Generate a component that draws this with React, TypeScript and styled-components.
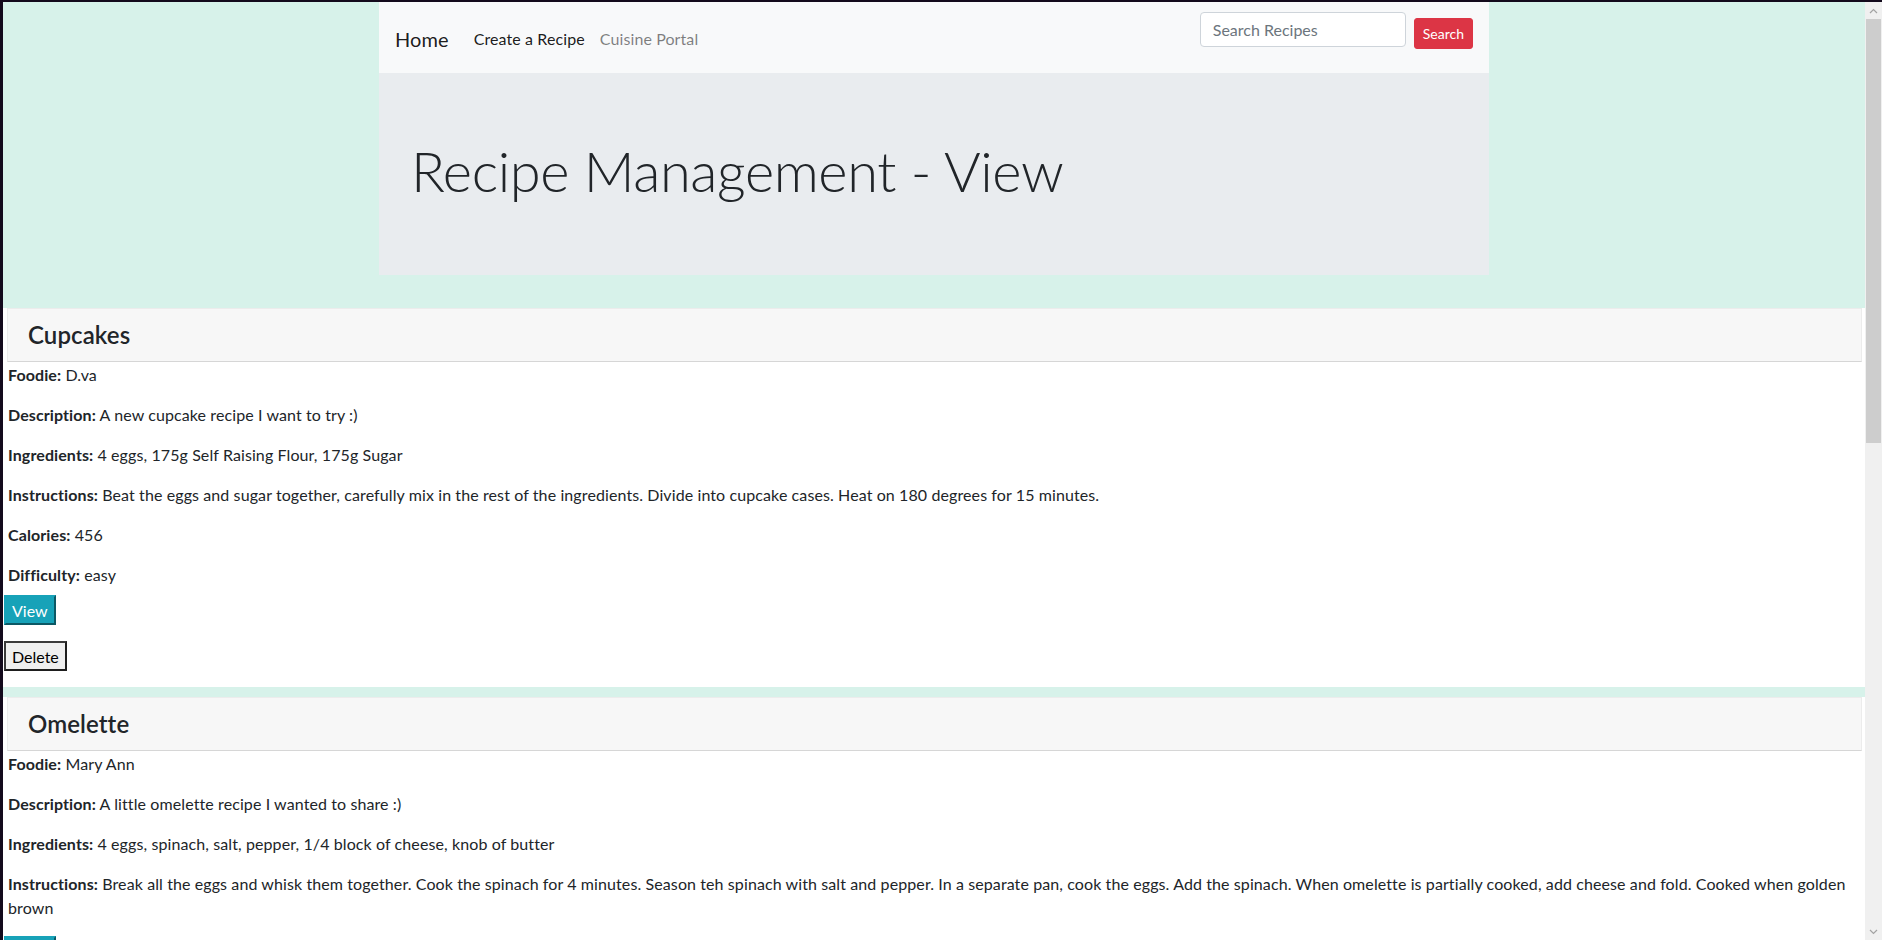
import React from "react";
import styled, { createGlobalStyle } from "styled-components";

const GlobalStyle = createGlobalStyle`
  html, body { margin: 0; padding: 0; }
  body {
    font-family: Lato, "Open Sans", sans-serif;
    background: #d7f2ea;
    color: #212529;
    font-size: 16px;
    line-height: 1.5;
    letter-spacing: 0.1px;
  }
`;

const Page = styled.div`
  box-sizing: border-box;
  min-height: 2000px;
  padding-right: 17px;
  border-top: 2px solid #130a1c;
  border-left: 3px solid #130a1c;
`;

const Scrollbar = styled.div`
  position: fixed;
  top: 2px;
  right: 0;
  bottom: 0;
  width: 17px;
  display: flex;
  flex-direction: column;
  background: #f0f0f0;
`;

const ScrollArrow = styled.div`
  height: 17px;
  display: flex;
  align-items: center;
  justify-content: center;
  flex: none;
`;

const ScrollTrack = styled.div`
  flex: 1;
`;

const ScrollThumb = styled.div`
  height: 424px;
  margin: 0 1px;
  background: #cdcdcd;
`;

const Container = styled.div`
  width: 1110px;
  margin: 0 auto;
`;

const Navbar = styled.nav`
  display: flex;
  align-items: flex-start;
  height: 71px;
  padding: 0 16px;
  background: #f8f9fa;
`;

const NavLeft = styled.div`
  display: flex;
  align-items: center;
  height: 71px;
  padding-top: 3px;
  box-sizing: border-box;
`;

const Brand = styled.a`
  font-size: 20px;
  line-height: 30px;
  color: rgba(0, 0, 0, 0.9);
  margin-right: 25px;
  text-decoration: none;
`;

const NavLink = styled.a<{ $muted?: boolean }>`
  font-size: 16px;
  line-height: 24px;
  color: ${(p) => (p.$muted ? "rgba(0,0,0,0.5)" : "rgba(0,0,0,0.9)")};
  margin-right: 15px;
  text-decoration: none;
`;

const SearchForm = styled.form`
  margin-left: auto;
  display: flex;
  align-items: flex-start;
  gap: 8px;
`;

const SearchInput = styled.input`
  box-sizing: border-box;
  width: 206px;
  height: 35px;
  margin-top: 10px;
  padding: 0 12px;
  border: 1px solid #ced4da;
  border-radius: 4px;
  background: #fff;
  font-family: inherit;
  font-size: 16px;
  color: #495057;
  &::placeholder { color: #6c757d; }
`;

const SearchButton = styled.button`
  box-sizing: border-box;
  height: 31px;
  margin-top: 16px;
  padding: 0 8px;
  border: 1px solid #dc3545;
  border-radius: 3px;
  background: #dc3545;
  color: #fff;
  font-family: inherit;
  font-size: 14px;
`;

const Jumbotron = styled.header`
  box-sizing: border-box;
  height: 202px;
  padding: 64px 32px 0;
  margin-bottom: 33px;
  background: #e9ecef;
`;

const Title = styled.h1`
  margin: 0;
  font-size: 56px;
  font-weight: 300;
  line-height: 1.2;
  letter-spacing: -0.4px;
  color: #212529;
`;

const RecipeCard = styled.section`
  display: flow-root;
  background: #fff;
  margin-bottom: 10px;
`;

const CardHeader = styled.div`
  margin: 0 3px 0 4px;
  padding: 12px 20px;
  background: #f7f7f7;
  border: 1px solid #ececec;
  border-bottom-color: #d6d6d6;
`;

const CardTitle = styled.h4`
  margin: 0;
  font-size: 24px;
  font-weight: 600;
  line-height: 28px;
`;

const Fields = styled.div`
  padding-top: 1px;
`;

const Field = styled.p<{ $tight?: boolean }>`
  margin: 0 0 ${(p) => (p.$tight ? "8px" : "16px")};
  padding-left: 5px;
  line-height: 24px;
`;

const ActionForm = styled.form`
  margin: 0 0 16px 1px;
`;

const ViewButton = styled.button`
  box-sizing: border-box;
  height: 30px;
  padding: 0 6px;
  font-family: inherit;
  font-size: 16px;
  color: #fff;
  background: #17a2b8;
  border: 2px outset #17a2b8;
`;

const DeleteButton = styled.button`
  box-sizing: border-box;
  height: 30px;
  padding: 0 6px;
  font-family: inherit;
  font-size: 16px;
  color: #000;
  background: #efefef;
  border: 2px solid;
  border-color: #3a3a3a #1e1e1e #1e1e1e #3a3a3a;
`;

type Recipe = {
  name: string;
  fields: [string, string][];
};

const recipes: Recipe[] = [
  {
    name: "Cupcakes",
    fields: [
      ["Foodie", "D.va"],
      ["Description", "A new cupcake recipe I want to try :)"],
      ["Ingredients", "4 eggs, 175g Self Raising Flour, 175g Sugar"],
      [
        "Instructions",
        "Beat the eggs and sugar together, carefully mix in the rest of the ingredients. Divide into cupcake cases. Heat on 180 degrees for 15 minutes.",
      ],
      ["Calories", "456"],
      ["Difficulty", "easy"],
    ],
  },
  {
    name: "Omelette",
    fields: [
      ["Foodie", "Mary Ann"],
      ["Description", "A little omelette recipe I wanted to share :)"],
      ["Ingredients", "4 eggs, spinach, salt, pepper, 1/4 block of cheese, knob of butter"],
      [
        "Instructions",
        "Break all the eggs and whisk them together. Cook the spinach for 4 minutes. Season teh spinach with salt and pepper. In a separate pan, cook the eggs. Add the spinach. When omelette is partially cooked, add cheese and fold. Cooked when golden brown",
      ],
    ],
  },
];

const Chevron = ({ up }: { up?: boolean }) => (
  <svg width="9" height="6" viewBox="0 0 9 6">
    <path
      d={up ? "M1 5 L4.5 1.5 L8 5" : "M1 1 L4.5 4.5 L8 1"}
      fill="none"
      stroke="#a3a3a3"
      strokeWidth="1.2"
    />
  </svg>
);

export default function App() {
  return (
    <>
      <GlobalStyle />
      <Page>
        <Container>
          <Navbar>
            <NavLeft>
              <Brand href="#">Home</Brand>
              <NavLink href="#">Create a Recipe</NavLink>
              <NavLink href="#" $muted>
                Cuisine Portal
              </NavLink>
            </NavLeft>
            <SearchForm onSubmit={(e) => e.preventDefault()}>
              <SearchInput type="text" placeholder="Search Recipes" />
              <SearchButton type="submit">Search</SearchButton>
            </SearchForm>
          </Navbar>
          <Jumbotron>
            <Title>Recipe Management - View</Title>
          </Jumbotron>
        </Container>
        {recipes.map((r) => (
          <RecipeCard key={r.name}>
            <CardHeader>
              <CardTitle>{r.name}</CardTitle>
            </CardHeader>
            <Fields>
              {r.fields.map(([label, value]) => (
                <Field key={label} $tight={label === "Difficulty"}>
                  <b>{label}:</b> {value}
                </Field>
              ))}
            </Fields>
            <ActionForm onSubmit={(e) => e.preventDefault()}>
              <ViewButton type="button">View</ViewButton>
            </ActionForm>
            <ActionForm onSubmit={(e) => e.preventDefault()}>
              <DeleteButton type="button">Delete</DeleteButton>
            </ActionForm>
          </RecipeCard>
        ))}
      </Page>
      <Scrollbar aria-hidden>
        <ScrollArrow>
          <Chevron up />
        </ScrollArrow>
        <ScrollTrack>
          <ScrollThumb />
        </ScrollTrack>
        <ScrollArrow>
          <Chevron />
        </ScrollArrow>
      </Scrollbar>
    </>
  );
}
